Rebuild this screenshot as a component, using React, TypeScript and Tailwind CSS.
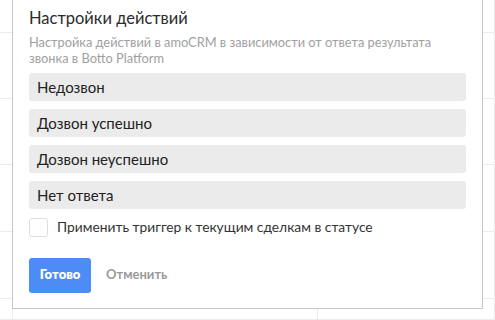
import React from "react";

const actions = ["Недозвон", "Дозвон успешно", "Дозвон неуспешно", "Нет ответа"];

export default function App() {
  return (
    <div className="relative w-[495px] h-[320px] overflow-hidden bg-white font-['Lato','Noto_Sans',sans-serif]">
      {/* background board grid */}
      <div className="grid grid-cols-[13px_305px_1fr] grid-rows-[33px_66px_66px_67px_67px_1fr] w-full h-full">
        {Array.from({ length: 18 }).map((_, i) => (
          <div key={i} className="border-r border-b border-[#ececec]" />
        ))}
      </div>

      {/* modal */}
      <div className="absolute left-[12px] top-0 w-[471px] h-[309px] bg-white border-x border-b border-[#c6c6c6] px-4 pt-[6px]">
        <h2 className="text-[16.5px] leading-6 text-[#2b2b2b]">Настройки действий</h2>
        <p className="mt-[4px] text-[12.8px] leading-4 text-[#a0a0a0]">
          Настройка действий в amoCRM в зависимости от ответа результата звонка в Botto Platform
        </p>
        <div className="mt-[7px] flex flex-col gap-2">
          {actions.map((a) => (
            <div key={a} className="h-[28px] flex items-center rounded-[3px] bg-[#ebebeb] px-2 text-[15px] text-[#222]">
              {a}
            </div>
          ))}
        </div>
        <label className="mt-[8px] flex items-center gap-[9px] text-[13.8px] text-[#333]">
          <span className="w-[19px] h-[19px] rounded-[3px] border border-[#dedede] bg-white" />
          Применить триггер к текущим сделкам в статусе
        </label>
        <div className="mt-[20px] flex items-center gap-[15px]">
          <button className="w-[62px] h-[35px] rounded-[3px] bg-[#4c8cf5] text-[13px] font-extrabold text-white">
            Готово
          </button>
          <button className="text-[13px] font-bold text-[#9a9a9a]">Отменить</button>
        </div>
      </div>
    </div>
  );
}
